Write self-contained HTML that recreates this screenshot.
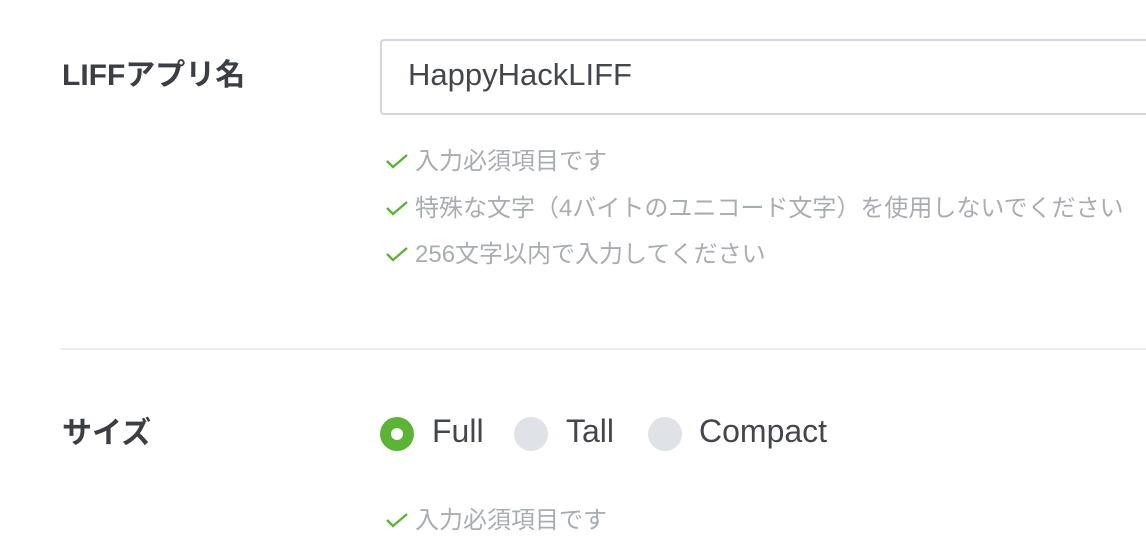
<!DOCTYPE html>
<html><head><meta charset="utf-8"><style>
body{margin:0;width:1146px;height:530px;overflow:hidden;background:#fff;font-family:"Liberation Sans","Noto Sans CJK JP",sans-serif;position:relative}
.a{position:absolute;white-space:nowrap;line-height:1.2}
.lbl{font-size:30px;font-weight:bold;color:#3b3f45}
.inp{left:380px;top:39px;width:800px;height:76px;border:2px solid #d3d6da;border-radius:4px;box-sizing:border-box}
.val{left:408px;top:56px;font-size:31px;color:#43474d}
.h{font-size:24px;color:#a8adb4;left:385px}
.h svg{vertical-align:middle;margin-right:6px;position:relative;top:-2px}
.r{top:417px;width:34px;height:34px;border-radius:50%;background:#dfe2e6}
.rt{top:412px;font-size:32px;color:#43474d}
</style></head><body>
<div class="a lbl" style="left:62px;top:58px">LIFFアプリ名</div>
<div class="a inp"></div>
<div class="a val">HappyHackLIFF</div>
<div class="a h" style="top:148px"><svg width="24" height="16" viewBox="0 0 24 16"><path d="M2 8l6 6L22 2" fill="none" stroke="#5ab534" stroke-width="2.4"/></svg>入力必須項目です</div>
<div class="a h" style="top:195px"><svg width="24" height="16" viewBox="0 0 24 16"><path d="M2 8l6 6L22 2" fill="none" stroke="#5ab534" stroke-width="2.4"/></svg>特殊な文字（4バイトのユニコード文字）を使用しないでください</div>
<div class="a h" style="top:241px"><svg width="24" height="16" viewBox="0 0 24 16"><path d="M2 8l6 6L22 2" fill="none" stroke="#5ab534" stroke-width="2.4"/></svg>256文字以内で入力してください</div>
<div class="a" style="left:60px;top:348px;width:1100px;height:2px;background:#ebedef"></div>
<div class="a lbl" style="left:62px;top:416px">サイズ</div>
<div class="a r" style="left:380px;background:#5ab534"><div style="position:absolute;left:11px;top:11px;width:12px;height:12px;border-radius:50%;background:#fff"></div></div>
<div class="a rt" style="left:432px">Full</div>
<div class="a r" style="left:514px"></div>
<div class="a rt" style="left:566px">Tall</div>
<div class="a r" style="left:648px"></div>
<div class="a rt" style="left:699px">Compact</div>
<div class="a h" style="top:507px"><svg width="24" height="16" viewBox="0 0 24 16"><path d="M2 8l6 6L22 2" fill="none" stroke="#5ab534" stroke-width="2.4"/></svg>入力必須項目です</div>
</body></html>
